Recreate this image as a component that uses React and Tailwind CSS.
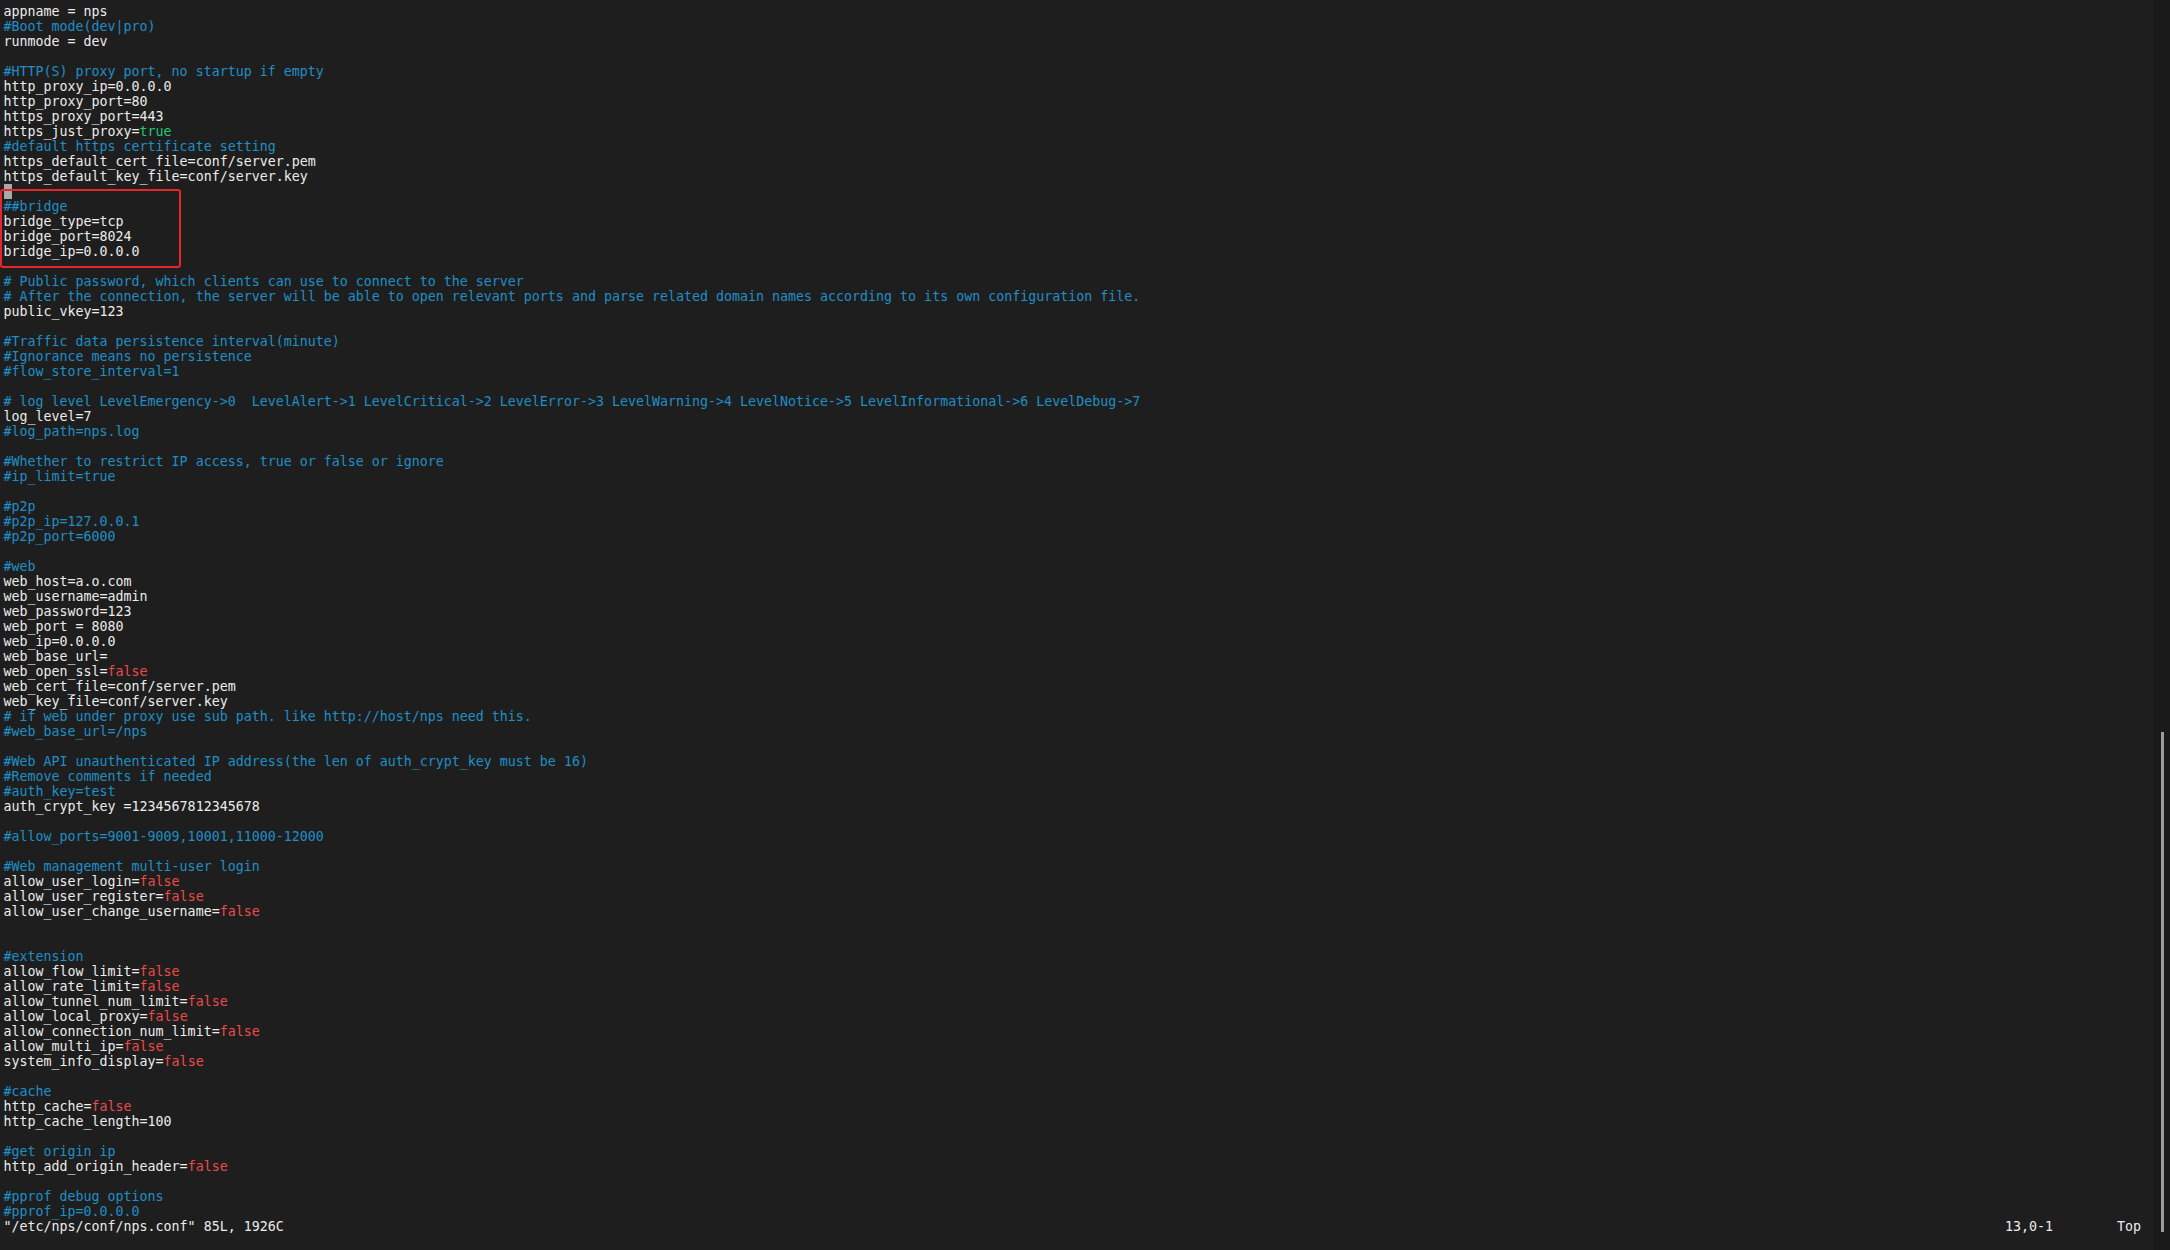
const lines = [
  "appname = nps",
  "#Boot mode(dev|pro)",
  "runmode = dev",
  "",
  "#HTTP(S) proxy port, no startup if empty",
  "http_proxy_ip=0.0.0.0",
  "http_proxy_port=80",
  "https_proxy_port=443",
  "https_just_proxy=true",
  "#default https certificate setting",
  "https_default_cert_file=conf/server.pem",
  "https_default_key_file=conf/server.key",
  "@cursor",
  "##bridge",
  "bridge_type=tcp",
  "bridge_port=8024",
  "bridge_ip=0.0.0.0",
  "",
  "# Public password, which clients can use to connect to the server",
  "# After the connection, the server will be able to open relevant ports and parse related domain names according to its own configuration file.",
  "public_vkey=123",
  "",
  "#Traffic data persistence interval(minute)",
  "#Ignorance means no persistence",
  "#flow_store_interval=1",
  "",
  "# log level LevelEmergency->0  LevelAlert->1 LevelCritical->2 LevelError->3 LevelWarning->4 LevelNotice->5 LevelInformational->6 LevelDebug->7",
  "log_level=7",
  "#log_path=nps.log",
  "",
  "#Whether to restrict IP access, true or false or ignore",
  "#ip_limit=true",
  "",
  "#p2p",
  "#p2p_ip=127.0.0.1",
  "#p2p_port=6000",
  "",
  "#web",
  "web_host=a.o.com",
  "web_username=admin",
  "web_password=123",
  "web_port = 8080",
  "web_ip=0.0.0.0",
  "web_base_url=",
  "web_open_ssl=false",
  "web_cert_file=conf/server.pem",
  "web_key_file=conf/server.key",
  "# if web under proxy use sub path. like http://host/nps need this.",
  "#web_base_url=/nps",
  "",
  "#Web API unauthenticated IP address(the len of auth_crypt_key must be 16)",
  "#Remove comments if needed",
  "#auth_key=test",
  "auth_crypt_key =1234567812345678",
  "",
  "#allow_ports=9001-9009,10001,11000-12000",
  "",
  "#Web management multi-user login",
  "allow_user_login=false",
  "allow_user_register=false",
  "allow_user_change_username=false",
  "",
  "",
  "#extension",
  "allow_flow_limit=false",
  "allow_rate_limit=false",
  "allow_tunnel_num_limit=false",
  "allow_local_proxy=false",
  "allow_connection_num_limit=false",
  "allow_multi_ip=false",
  "system_info_display=false",
  "",
  "#cache",
  "http_cache=false",
  "http_cache_length=100",
  "",
  "#get origin ip",
  "http_add_origin_header=false",
  "",
  "#pprof debug options",
  "#pprof_ip=0.0.0.0",
]

const Line = ({ text }) => {
  if (text === "@cursor") {
    return (
      <div className="h-[15px] leading-[15px]">
        <span className="inline-block w-[8px] h-[15px] align-top bg-[#a8a8a8]"></span>
      </div>
    )
  }
  if (text.startsWith("#")) {
    return <div className="h-[15px] leading-[15px] whitespace-pre text-[#1f8fc6]">{text}</div>
  }
  const m = text.match(/^(.*=)(true|false)$/)
  if (m) {
    return (
      <div className="h-[15px] leading-[15px] whitespace-pre">
        {m[1]}
        <span className={m[2] === "true" ? "text-[#23c878]" : "text-[#ec4a4a]"}>{m[2]}</span>
      </div>
    )
  }
  return <div className="h-[15px] leading-[15px] whitespace-pre">{text || " "}</div>
}

export default function App() {
  return (
    <div
      className="w-[2170px] h-[1250px] flex bg-[#1e1e1e] text-[#ececec] text-[13.3px] overflow-hidden"
      style={{ fontFamily: '"DejaVu Sans Mono", "Liberation Mono", monospace' }}
    >
      <div className="relative w-[2153px] pl-[3.5px] pr-[4px] pt-[3.5px]">
        {lines.map((l, i) => (
          <Line key={i} text={l} />
        ))}
        <div className="h-[15px] leading-[15px] flex justify-between whitespace-pre">
          <span>"/etc/nps/conf/nps.conf" 85L, 1926C</span>
          <div className="w-[144px] flex">
            <span className="w-[112px]">13,0-1</span>
            <span>Top</span>
          </div>
        </div>
        {/* annotation box */}
        <div className="absolute left-0 top-[189px] w-[181px] h-[79px] border-[2.5px] border-[#e5262a] rounded-[3px]"></div>
      </div>
      <div className="w-[17px] h-full bg-[#1a1a1a] pt-[732px]">
        <div className="ml-[8px] w-[3px] h-[500px] bg-[#9c9c9c]"></div>
      </div>
    </div>
  )
}
